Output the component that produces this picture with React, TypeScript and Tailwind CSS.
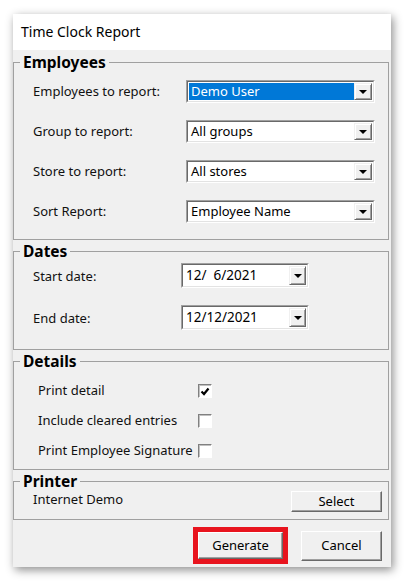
import React from "react";

const font = "font-['Noto_Sans',sans-serif]";

function Arrow() {
  return (
    <svg width="8" height="4" viewBox="0 0 8 4">
      <path d="M0 0h8L4 4z" fill="#000" />
    </svg>
  );
}

function DropButton({ w }: { w: string }) {
  return (
    <div
      className={`flex ${w} items-center justify-center border border-t-[#f0f0f0] border-l-[#f0f0f0] border-b-[#696969] border-r-[#696969] bg-[#f0f0f0] shadow-[inset_1px_1px_0_#fff,inset_-1px_-1px_0_#a0a0a0]`}
    >
      <Arrow />
    </div>
  );
}

function Combo({
  value,
  selected = false,
  w = "w-[189px]",
  h = "h-[23px]",
  btn = "w-[18px]",
  text = "text-[13px]",
}: {
  value: string;
  selected?: boolean;
  w?: string;
  h?: string;
  btn?: string;
  text?: string;
}) {
  return (
    <div className={`flex ${w} ${h} border border-t-[#a0a0a0] border-l-[#a0a0a0] border-b-white border-r-white`}>
      <div className="flex flex-1 border border-t-[#696969] border-l-[#696969] border-b-[#e3e3e3] border-r-[#e3e3e3] bg-white p-px">
        <div
          className={`flex flex-1 items-center whitespace-pre px-[2px] ${text} ${
            selected ? "bg-[#0078d7] text-white" : "text-black"
          }`}
        >
          {value}
        </div>
        <DropButton w={btn} />
      </div>
    </div>
  );
}

function Check({ checked = false }: { checked?: boolean }) {
  return (
    <div className="flex h-[14px] w-[14px] items-center justify-center border border-t-[#808080] border-l-[#808080] border-b-white border-r-white bg-white shadow-[inset_1px_1px_0_#c0c0c0]">
      {checked && (
        <svg width="10" height="9" viewBox="0 0 10 9">
          <path d="M1.5 4.5 L4 7 L8.5 1.5" fill="none" stroke="#000" strokeWidth="2.2" />
        </svg>
      )}
    </div>
  );
}

function Button({ label, className = "" }: { label: string; className?: string }) {
  return (
    <div
      className={`flex items-center justify-center border border-t-white border-l-white border-b-[#696969] border-r-[#696969] bg-[#f0f0f0] text-[13px] text-black shadow-[inset_-1px_-1px_0_#a0a0a0] ${className}`}
    >
      {label}
    </div>
  );
}

function Group({ title, children }: { title: string; children: React.ReactNode }) {
  return (
    <fieldset className="mr-[2px] border border-[#a0a0a0]">
      <legend className="ml-[6px] px-[3px] text-[15.5px] font-bold leading-[18px] text-black">{title}</legend>
      {children}
    </fieldset>
  );
}

export default function App() {
  const employeeRows = [
    { label: "Employees to report:", value: "Demo User", selected: true },
    { label: "Group to report:", value: "All groups" },
    { label: "Store to report:", value: "All stores" },
    { label: "Sort Report:", value: "Employee Name" },
  ];

  const details = [
    { label: "Print detail", checked: true },
    { label: "Include cleared entries" },
    { label: "Print Employee Signature" },
  ];

  return (
    <div className={`min-h-screen bg-white pl-[13px] pt-[14px] ${font}`}>
      <div className="flex h-[553px] w-[378px] flex-col bg-[#f0f0f0] shadow-[2px_3px_9px_rgba(0,0,0,0.45)]">
        {/* title bar */}
        <div className="flex h-[36px] items-center bg-white pb-[2px] pl-[8px] text-[14px] text-black">Time Clock Report</div>

        <div className="mt-[3px] flex flex-col gap-[2px]">
          <Group title="Employees">
            <div className="flex flex-col gap-[17px] pb-[16px] pl-[19px] pt-[9px]">
              {employeeRows.map((r) => (
                <div key={r.label} className="flex items-center">
                  <span className="w-[153px] text-[13px] text-[#111]">{r.label}</span>
                  <Combo value={r.value} selected={r.selected} />
                </div>
              ))}
            </div>
          </Group>

          <Group title="Dates">
            <div className="flex flex-col gap-[17px] pb-[19px] pl-[19px] pt-[3px]">
              <div className="flex items-center">
                <span className="w-[148px] pt-[2px] text-[13px] text-[#111]">Start date:</span>
                <Combo value="12/  6/2021" w="w-[128px]" h="h-[25px]" btn="w-[17px]" text="text-[13.5px]" />
              </div>
              <div className="flex items-center">
                <span className="w-[148px] pt-[2px] text-[13px] text-[#111]">End date:</span>
                <Combo value="12/12/2021" w="w-[128px]" h="h-[25px]" btn="w-[17px]" text="text-[13.5px]" />
              </div>
            </div>
          </Group>

          <Group title="Details">
            <div className="flex flex-col gap-[10px] pb-[8px] pl-[24px] pt-[11px]">
              {details.map((d) => (
                <div key={d.label} className="flex h-[20px] items-center">
                  <span className="w-[160px] text-[13px] text-[#111]">{d.label}</span>
                  <Check checked={d.checked} />
                </div>
              ))}
            </div>
          </Group>

          <Group title="Printer">
            <div className="flex items-start justify-between pb-[7px] pl-[19px] pr-[6px]">
              <span className="text-[13px] leading-[18px] text-[#111]">Internet Demo</span>
              <Button label="Select" className="mt-[1px] h-[21px] w-[91px]" />
            </div>
          </Group>
        </div>

        {/* footer buttons */}
        <div className="flex items-start justify-end gap-[13px] pr-[9px] pt-[7px]">
          <div className="flex h-[37px] w-[95px] border-[5px] border-[#e8141e]">
            <Button label="Generate" className="flex-1" />
          </div>
          <Button label="Cancel" className="mt-[4px] h-[30px] w-[81px]" />
        </div>
      </div>
    </div>
  );
}
